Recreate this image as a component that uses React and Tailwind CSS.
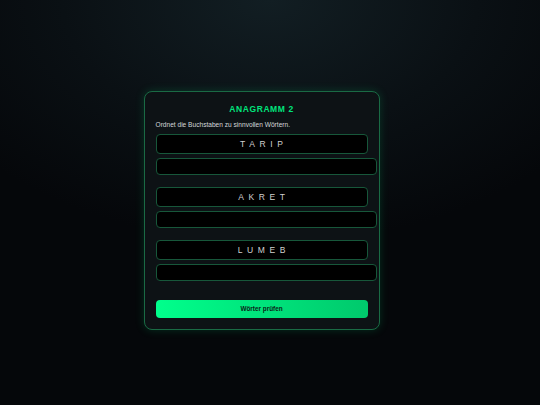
const words = ["TARIP", "AKRET", "LUMEB"];

export default function App() {
  return (
    <div
      className="min-h-screen w-full flex items-center justify-center pt-[16px] pr-[17px] bg-[radial-gradient(ellipse_70%_60%_at_50%_0%,#121e23_0%,#0a1014_55%,#05070a_100%)]"
      style={{ fontFamily: '"Liberation Sans", Arial, sans-serif' }}
    >
      <div className="w-[236px] rounded-[8px] border border-[#1a6a44] bg-[#0d1215] px-[11px] pt-[11px] pb-[11px] shadow-[0_0_10px_rgba(0,230,120,0.18)]">
        <h1 className="text-center text-[8.5px] leading-[12px] font-bold tracking-[0.6px] text-[#00e47c]">
          ANAGRAMM 2
        </h1>
        <p className="mt-[5px] text-[6.6px] leading-[9px] text-[#d4d8da]">
          Ordnet die Buchstaben zu sinnvollen Wörtern.
        </p>
        <div className="mt-[5px] flex flex-col gap-[12px]">
          {words.map((w) => (
            <div key={w} className="flex flex-col gap-[4px]">
              <div className="h-[20px] w-[212px] rounded-[4px] border border-[#17573a] bg-black flex items-center justify-center text-[8.5px] tracking-[4.6px] pl-[4.6px] text-[#d0d0d0]">
                {w}
              </div>
              <input
                type="text"
                className="h-[17px] w-[221px] rounded-[4px] border border-[#17573a] bg-black px-[4px] text-[8px] text-white outline-none"
              />
            </div>
          ))}
        </div>
        <button className="mt-[19px] h-[18px] w-[212px] rounded-[4px] bg-gradient-to-r from-[#00ff8c] to-[#00c96c] text-[6.4px] font-bold text-[#0b2417]">
          Wörter prüfen
        </button>
      </div>
    </div>
  );
}
